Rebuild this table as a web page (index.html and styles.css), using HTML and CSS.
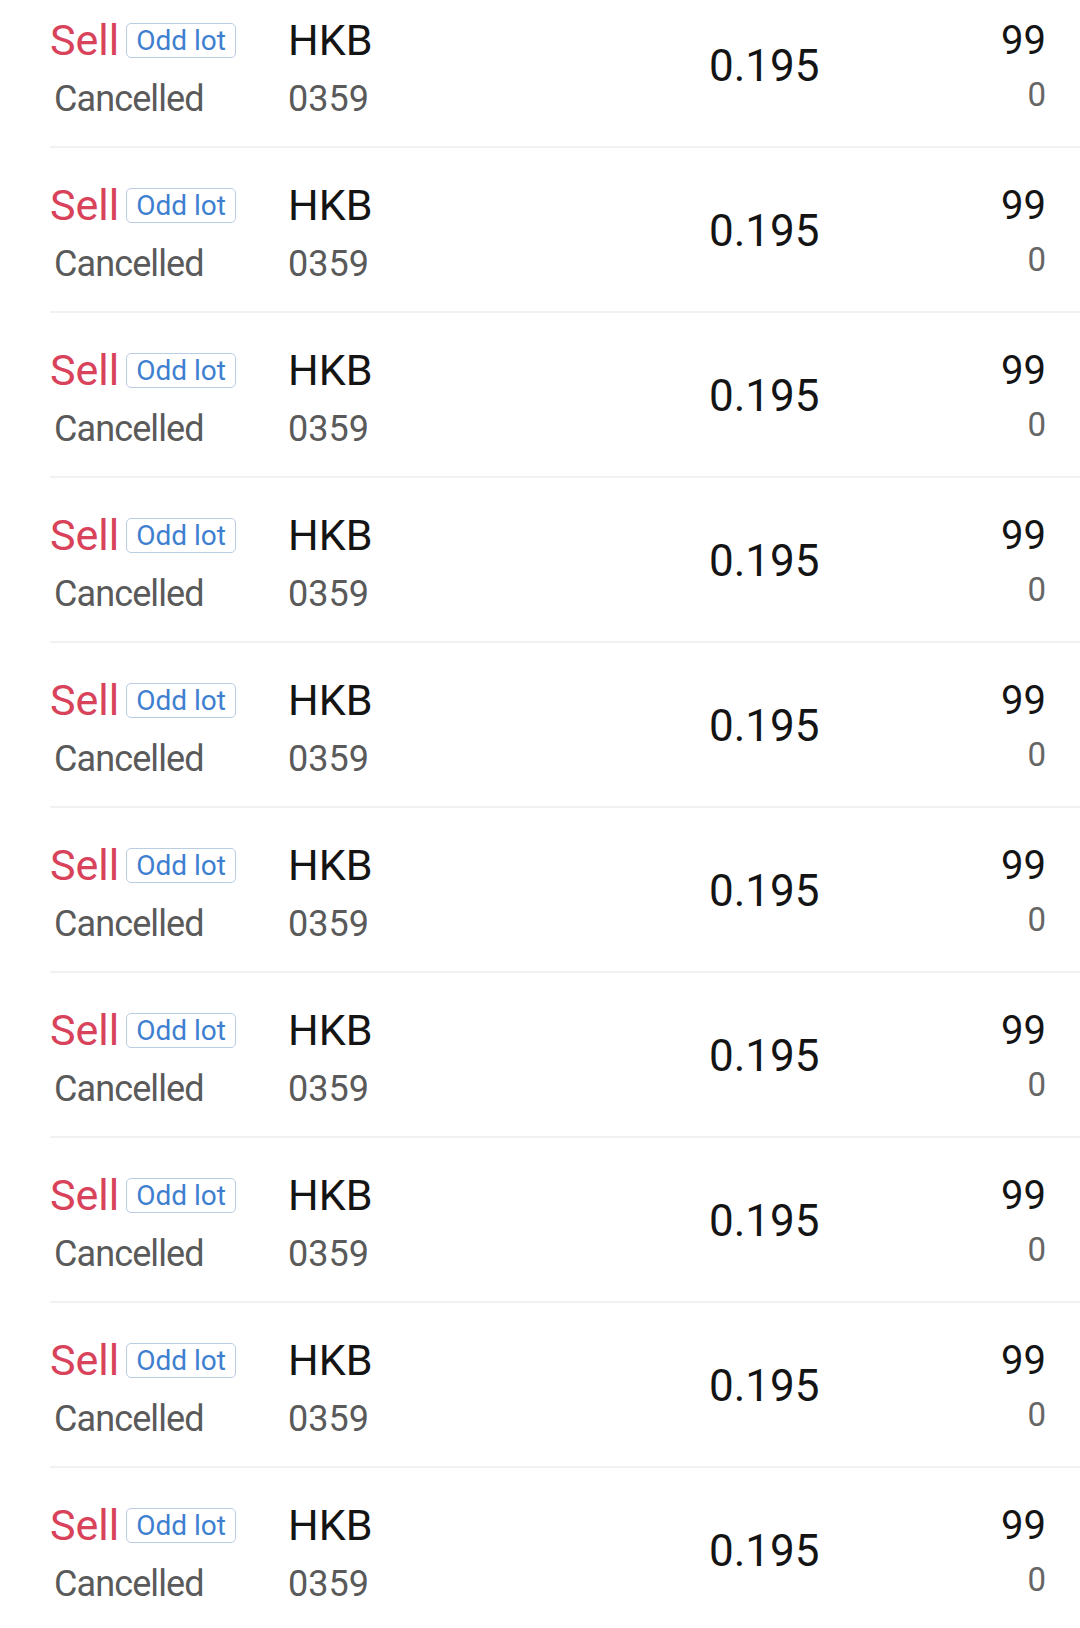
FILE: index.html
```html
<!DOCTYPE html>
<html>
<head>
<meta charset="utf-8">
<link rel="stylesheet" href="styles.css">
</head>
<body>
<div class="list">
  <div class="row">
    <div class="col side"><div class="top"><span class="sell">Sell</span><span class="badge">Odd lot</span></div><div class="sub status">Cancelled</div></div>
    <div class="col code"><div class="top">HKB</div><div class="sub">0359</div></div>
    <div class="price">0.195</div>
    <div class="col qty"><div class="qtop">99</div><div class="qsub">0</div></div>
  </div>
  <div class="row">
    <div class="col side"><div class="top"><span class="sell">Sell</span><span class="badge">Odd lot</span></div><div class="sub status">Cancelled</div></div>
    <div class="col code"><div class="top">HKB</div><div class="sub">0359</div></div>
    <div class="price">0.195</div>
    <div class="col qty"><div class="qtop">99</div><div class="qsub">0</div></div>
  </div>
  <div class="row">
    <div class="col side"><div class="top"><span class="sell">Sell</span><span class="badge">Odd lot</span></div><div class="sub status">Cancelled</div></div>
    <div class="col code"><div class="top">HKB</div><div class="sub">0359</div></div>
    <div class="price">0.195</div>
    <div class="col qty"><div class="qtop">99</div><div class="qsub">0</div></div>
  </div>
  <div class="row">
    <div class="col side"><div class="top"><span class="sell">Sell</span><span class="badge">Odd lot</span></div><div class="sub status">Cancelled</div></div>
    <div class="col code"><div class="top">HKB</div><div class="sub">0359</div></div>
    <div class="price">0.195</div>
    <div class="col qty"><div class="qtop">99</div><div class="qsub">0</div></div>
  </div>
  <div class="row">
    <div class="col side"><div class="top"><span class="sell">Sell</span><span class="badge">Odd lot</span></div><div class="sub status">Cancelled</div></div>
    <div class="col code"><div class="top">HKB</div><div class="sub">0359</div></div>
    <div class="price">0.195</div>
    <div class="col qty"><div class="qtop">99</div><div class="qsub">0</div></div>
  </div>
  <div class="row">
    <div class="col side"><div class="top"><span class="sell">Sell</span><span class="badge">Odd lot</span></div><div class="sub status">Cancelled</div></div>
    <div class="col code"><div class="top">HKB</div><div class="sub">0359</div></div>
    <div class="price">0.195</div>
    <div class="col qty"><div class="qtop">99</div><div class="qsub">0</div></div>
  </div>
  <div class="row">
    <div class="col side"><div class="top"><span class="sell">Sell</span><span class="badge">Odd lot</span></div><div class="sub status">Cancelled</div></div>
    <div class="col code"><div class="top">HKB</div><div class="sub">0359</div></div>
    <div class="price">0.195</div>
    <div class="col qty"><div class="qtop">99</div><div class="qsub">0</div></div>
  </div>
  <div class="row">
    <div class="col side"><div class="top"><span class="sell">Sell</span><span class="badge">Odd lot</span></div><div class="sub status">Cancelled</div></div>
    <div class="col code"><div class="top">HKB</div><div class="sub">0359</div></div>
    <div class="price">0.195</div>
    <div class="col qty"><div class="qtop">99</div><div class="qsub">0</div></div>
  </div>
  <div class="row">
    <div class="col side"><div class="top"><span class="sell">Sell</span><span class="badge">Odd lot</span></div><div class="sub status">Cancelled</div></div>
    <div class="col code"><div class="top">HKB</div><div class="sub">0359</div></div>
    <div class="price">0.195</div>
    <div class="col qty"><div class="qtop">99</div><div class="qsub">0</div></div>
  </div>
  <div class="row">
    <div class="col side"><div class="top"><span class="sell">Sell</span><span class="badge">Odd lot</span></div><div class="sub status">Cancelled</div></div>
    <div class="col code"><div class="top">HKB</div><div class="sub">0359</div></div>
    <div class="price">0.195</div>
    <div class="col qty"><div class="qtop">99</div><div class="qsub">0</div></div>
  </div>
</div>
</body>
</html>
```
FILE: styles.css
```css
html, body {
  margin: 0;
  padding: 0;
  background: #ffffff;
  overflow: hidden;
}
body {
  font-family: Roboto, "Noto Sans", "Liberation Sans", sans-serif;
  width: 1080px;
  height: 1628px;
}
.list {
  margin-top: -17px;
  margin-left: 50px;
}
.row {
  display: grid;
  grid-template-columns: 238px 421px 1fr auto;
  height: 163px;
  border-bottom: 2px solid #f1f1f1;
  padding-right: 34px;
  box-sizing: content-box;
}
.col {
  display: flex;
  flex-direction: column;
  padding-top: 32px;
}
.top {
  display: flex;
  align-items: center;
  height: 50px;
  font-size: 43px;
  line-height: 50px;
  color: #141414;
}
.sub {
  margin-top: 9px;
  font-size: 36px;
  line-height: 50px;
  color: #5a5a5a;
}
.status {
  padding-left: 4px;
  letter-spacing: -0.9px;
  color: #5a5a5a;
}
.sell {
  color: #d8435b;
}
.badge {
  margin-left: 7px;
  height: 35px;
  box-sizing: border-box;
  padding: 0 9px;
  border: 1.5px solid #b9cde3;
  border-radius: 5px;
  font-size: 28px;
  line-height: 33px;
  color: #3f7fd0;
}
.price {
  padding-top: 58px;
  font-size: 44px;
  line-height: 50px;
  color: #141414;
}
.qty {
  align-items: flex-end;
  padding-top: 33px;
}
.qtop {
  font-size: 40px;
  line-height: 50px;
  color: #141414;
}
.qsub {
  margin-top: 4px;
  font-size: 33px;
  line-height: 50px;
  color: #666666;
}
```
